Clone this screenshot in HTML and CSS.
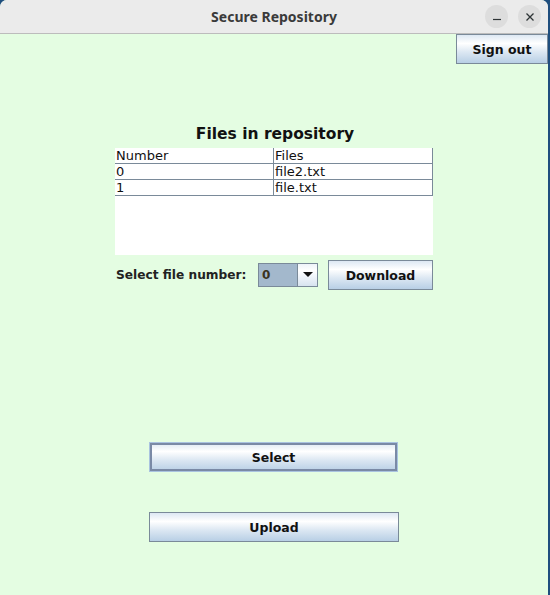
FILE: index.html
```html
<!DOCTYPE html>
<html>
<head>
<meta charset="utf-8">
<link rel="stylesheet" href="styles.css">
</head>
<body>
<div class="window">
  <header class="titlebar">
    <div class="title">Secure Repository</div>
    <div class="wm-buttons">
      <span class="wm-btn"><svg width="10" height="10" viewBox="0 0 10 10"><line x1="1" y1="7.5" x2="9" y2="7.5" stroke="#2e3436" stroke-width="1.2"/></svg></span>
      <span class="wm-btn"><svg width="10" height="10" viewBox="0 0 10 10"><path d="M1.5 1.5 L8.5 8.5 M8.5 1.5 L1.5 8.5" stroke="#2e3436" stroke-width="1.3"/></svg></span>
    </div>
  </header>
  <main class="content">
    <div class="top-row">
      <button class="btn signout">Sign out</button>
    </div>
    <section class="repo">
      <h1 class="repo-title">Files in repository</h1>
      <div class="table">
        <div class="row"><div class="cell">Number</div><div class="cell">Files</div></div>
        <div class="row"><div class="cell">0</div><div class="cell">file2.txt</div></div>
        <div class="row"><div class="cell">1</div><div class="cell">file.txt</div></div>
      </div>
      <div class="controls">
        <span class="label">Select file number:</span>
        <div class="combo">
          <span class="combo-value">0</span>
          <span class="combo-arrow"><svg width="10" height="6" viewBox="0 0 10 6"><path d="M0 0 H10 L5 5 Z" fill="#111"/></svg></span>
        </div>
        <button class="btn download">Download</button>
      </div>
    </section>
    <div class="actions">
      <button class="btn wide focused">Select</button>
      <button class="btn wide upload">Upload</button>
    </div>
  </main>
</div>
</body>
</html>
```

FILE: styles.css
```css
html, body {
  margin: 0;
  padding: 0;
}
body {
  width: 550px;
  height: 595px;
  overflow: hidden;
  background: #1f4e7e;
}
.window {
  width: 548px;
  height: 595px;
  display: flex;
  flex-direction: column;
  background: #e4fde2;
  border-top-left-radius: 7px;
  border-top-right-radius: 7px;
  overflow: hidden;
}
.titlebar {
  height: 33px;
  flex: none;
  background: #ebebeb;
  border-bottom: 1px solid #bcbcbc;
  display: flex;
  align-items: center;
  justify-content: center;
  position: relative;
}
.title {
  font-family: "Noto Sans", sans-serif;
  font-weight: 700;
  font-size: 14px;
  color: #3a3a3a;
}
.wm-buttons {
  position: absolute;
  right: 7px;
  top: 5px;
  display: flex;
  gap: 10px;
}
.wm-btn {
  width: 23px;
  height: 23px;
  border-radius: 50%;
  background: #dddddd;
  display: flex;
  align-items: center;
  justify-content: center;
}
.content {
  flex: 1;
  display: flex;
  flex-direction: column;
  font-family: "DejaVu Sans", sans-serif;
  color: #222;
}
.top-row {
  display: flex;
  justify-content: flex-end;
}
.btn {
  font-family: "DejaVu Sans", sans-serif;
  font-weight: 700;
  font-size: 12.5px;
  color: #111;
  border: 1px solid #7a8a99;
  background: linear-gradient(to bottom, #dde8f3 0%, #ffffff 30%, #dde8f3 60%, #b8cfe5 100%);
  padding: 0;
  margin: 0;
  height: 30px;
  box-sizing: border-box;
}
.signout {
  width: 92px;
}
.repo {
  margin-left: 115px;
  width: 318px;
  display: flex;
  flex-direction: column;
}
.repo-title {
  margin: 60px 0 0 0;
  font-size: 15.5px;
  line-height: 20px;
  font-weight: 700;
  text-align: center;
  color: #111;
  padding-left: 2px;
}
.table {
  margin-top: 4px;
  height: 107px;
  background: #fff;
  font-size: 13px;
  color: #111;
}
.row {
  display: grid;
  grid-template-columns: 159px 159px;
  height: 16px;
}
.cell {
  border-right: 1px solid #7a8a99;
  border-bottom: 1px solid #7a8a99;
  line-height: 15px;
  padding-left: 1px;
  overflow: hidden;
  white-space: nowrap;
}
.controls {
  margin-top: 5px;
  height: 30px;
  display: flex;
  align-items: center;
}
.label {
  font-weight: 700;
  font-size: 12.2px;
  color: #222;
  width: 142px;
  flex: none;
  padding-left: 1px;
}
.combo {
  width: 60px;
  height: 24px;
  box-sizing: border-box;
  border: 1px solid #7a8a99;
  display: flex;
  flex: none;
}
.combo-value {
  width: 39px;
  background: #a3b8cc;
  border-right: 1px solid #7a8a99;
  font-weight: 700;
  font-size: 12px;
  color: #3a3320;
  line-height: 22px;
  padding-left: 3px;
  box-sizing: border-box;
}
.combo-arrow {
  flex: 1;
  display: flex;
  align-items: center;
  justify-content: center;
  background: linear-gradient(to bottom, #eef3f9 0%, #ffffff 30%, #eef3f9 60%, #d7e3ef 100%);
}
.download {
  margin-left: 10px;
  width: 105px;
}
.actions {
  margin-left: 149px;
  width: 250px;
  display: flex;
  flex-direction: column;
  margin-top: 152px;
  gap: 40px;
}
.wide {
  width: 250px;
}
.focused {
  width: 249px;
  border: 1px solid #a9c3e0;
  box-shadow: inset 0 0 0 2px #7a8aa6;
}
```
